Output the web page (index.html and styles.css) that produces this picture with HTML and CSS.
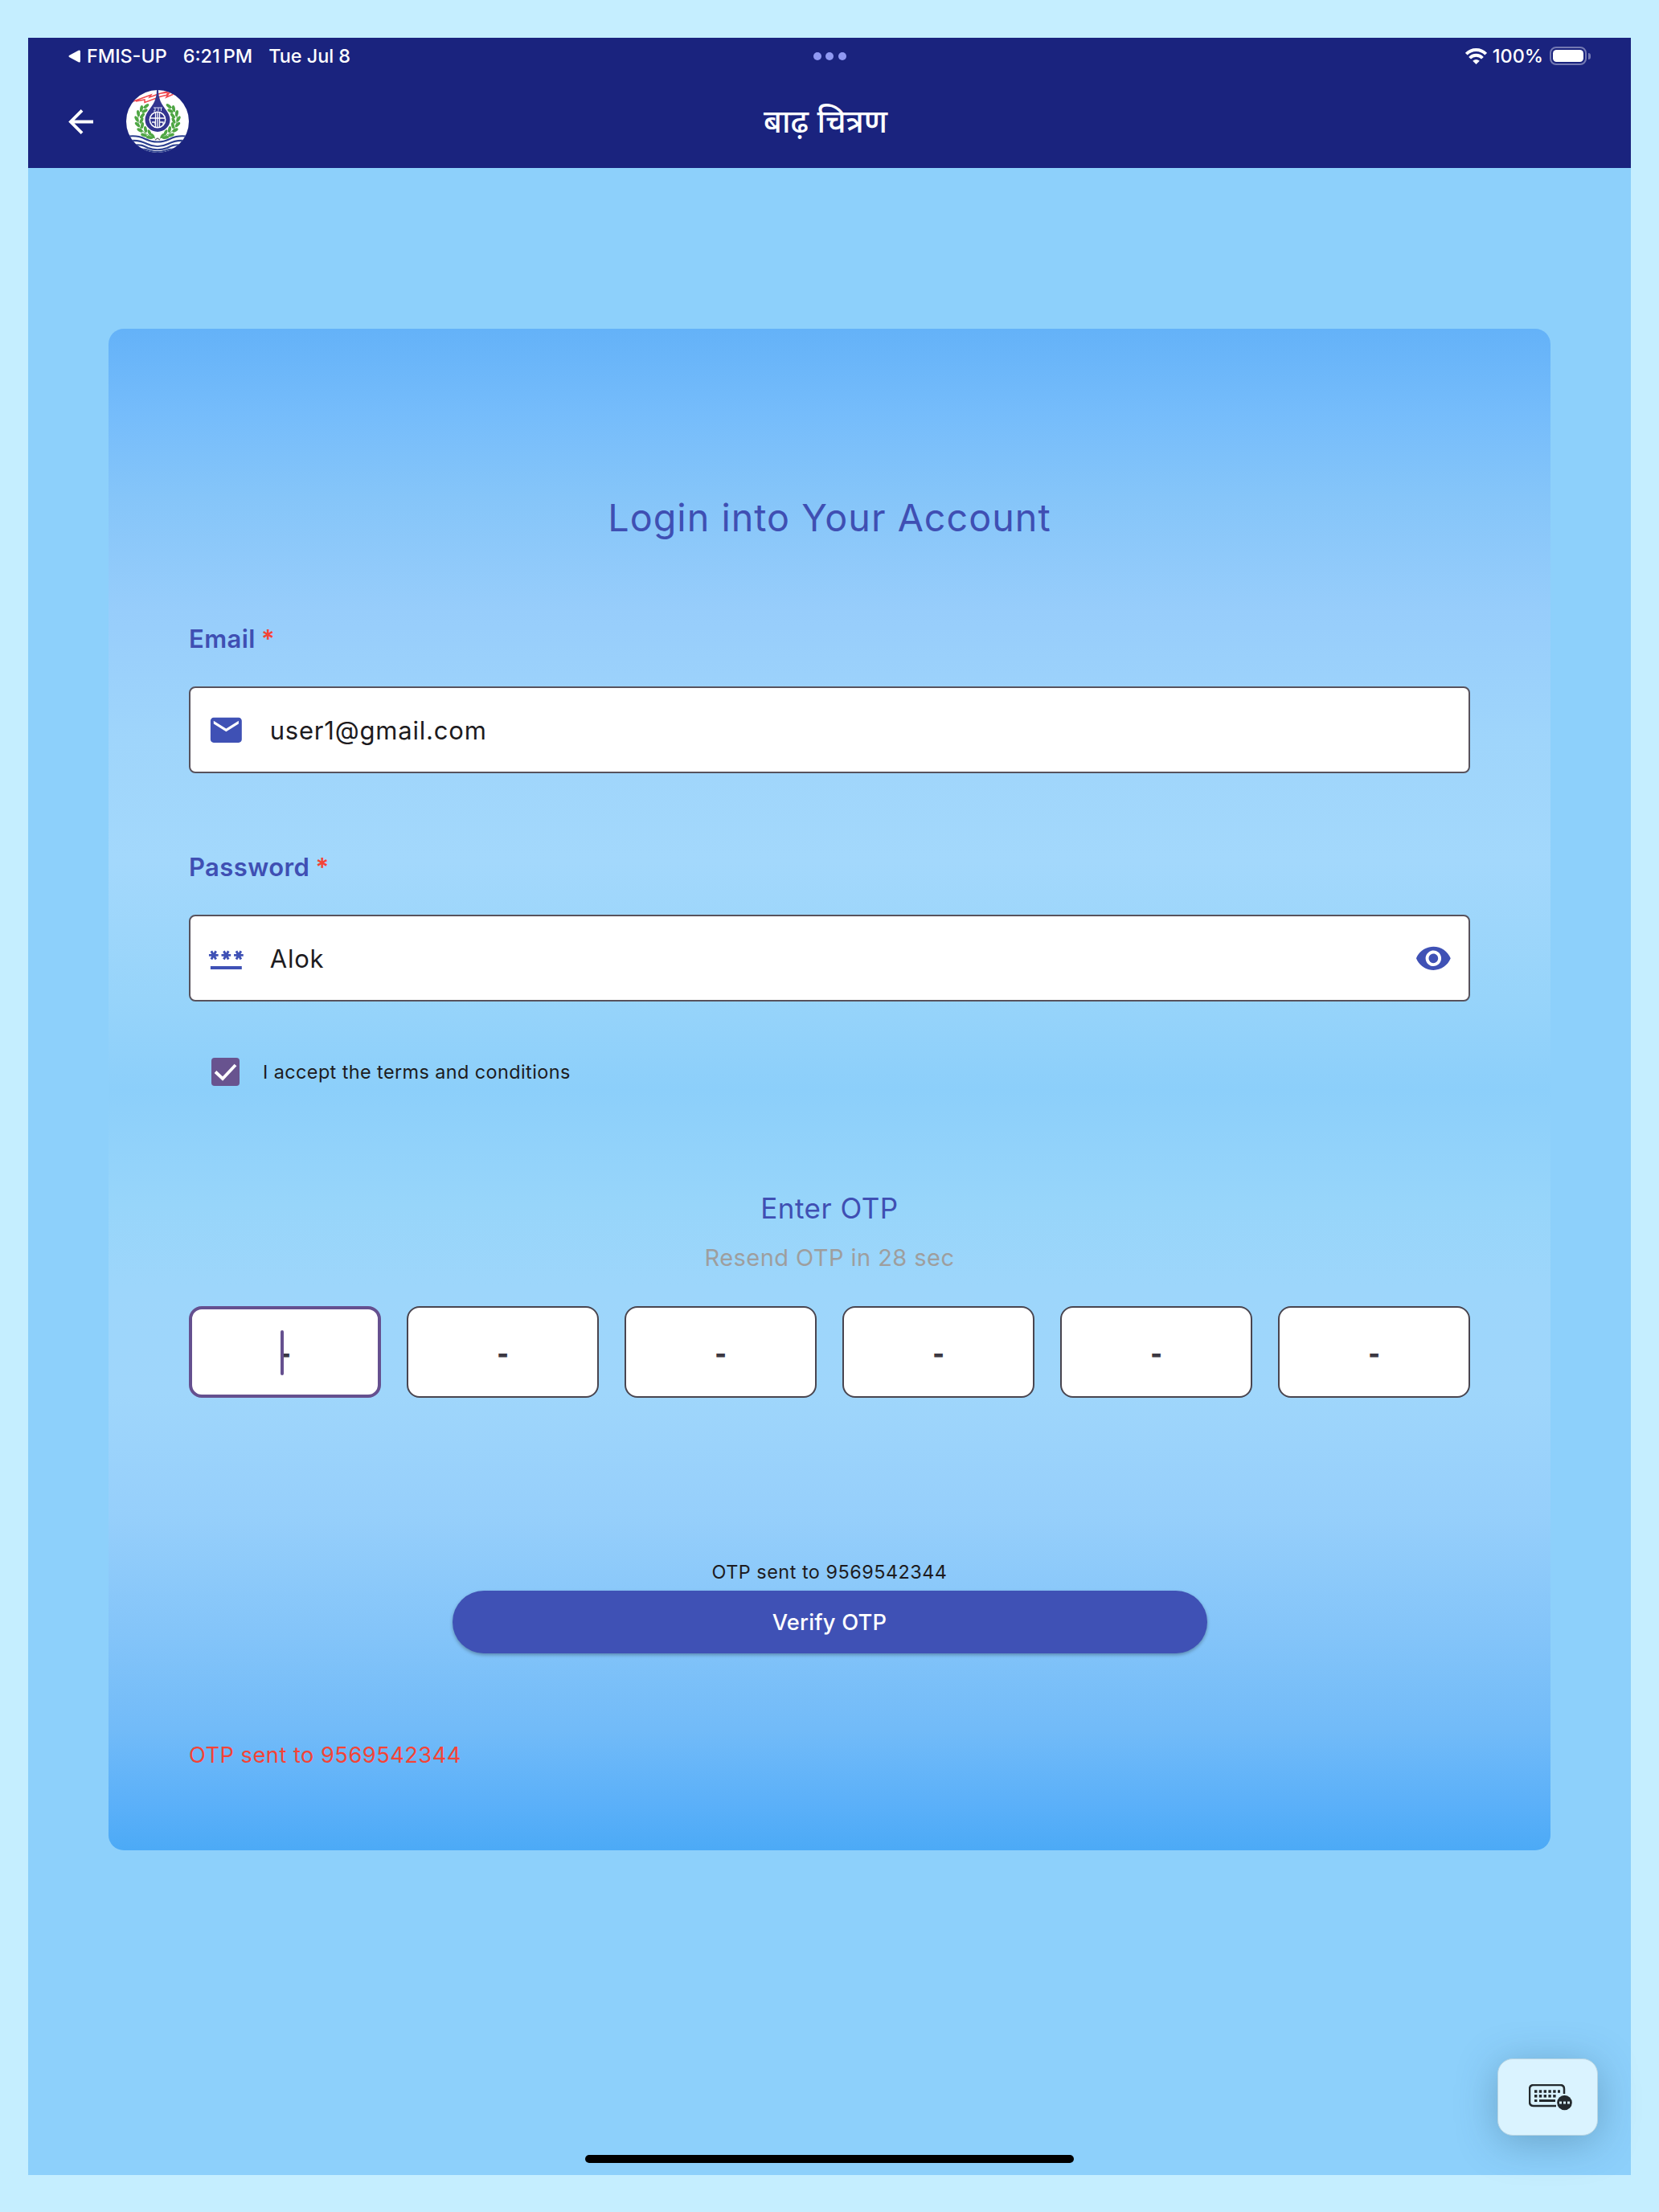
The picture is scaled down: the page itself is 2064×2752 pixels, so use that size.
FILE: index.html
```html
<!DOCTYPE html>
<html lang="hi">

<head>
    <meta charset="UTF-8">
    <meta name="viewport" content="width=device-width, initial-scale=1.0">
    <title>बाढ़ चित्रण</title>
    <link rel="stylesheet" href="styles.css">
</head>

<body>
    <div class="screen">
        <header class="header">
            <div class="status-bar">
                <div class="status-left">
                    <svg class="back-app" viewBox="0 0 15 16"><path d="M1 7 12.600.700Q15-.3 15 2v12q0 2.300-2.400 1.300L1 9Q0 8 1 7z" fill="#fff"/></svg>
                    <span class="status-app">FMIS-UP</span>
                    <span class="status-time">6:21&#8201;PM</span>
                    <span class="status-date">Tue Jul 8</span>
                </div>
                <div class="dots"><i></i><i></i><i></i></div>
                <div class="status-right">
                    <svg class="wifi" viewBox="0 0 27 20">
                        <path d="M1.300 7.200a17 17 0 0 1 24.400 0" fill="none" stroke="#fff" stroke-width="4"/>
                        <path d="M5.600 12.200a10.800 10.800 0 0 1 15.800 0" fill="none" stroke="#fff" stroke-width="3.800"/>
                        <path d="M13.500 20l-4.300-4.200q4.300-3.400 8.600 0z" fill="#fff"/>
                    </svg>
                    <span class="battery-text">100%</span>
                    <div class="battery"><div class="battery-fill"></div></div>
                    <div class="battery-tip"></div>
                </div>
            </div>
            <div class="app-bar">
                <div class="app-bar-left">
                    <svg class="back" viewBox="0 0 30 30"><path d="M30 15H3M16.500 1.300 2.800 15l13.700 13.700" fill="none" stroke="#fff" stroke-width="3.700"/></svg>
                    <svg class="logo" viewBox="0 0 78 78">
                        <defs>
                            <clipPath id="logo-clip"><circle cx="39" cy="39" r="39"/></clipPath>
                            <g id="branch" fill="#4fa644">
                                <path d="M36 60Q12 52 15 32 17 24 26 18" fill="none" stroke="#4fa644" stroke-width="1"/>
                                <ellipse cx="25" cy="20" rx="1.900" ry="4" transform="rotate(50 25 20)"/>
                                <ellipse cx="19" cy="23" rx="1.900" ry="4" transform="rotate(10 19 23)"/>
                                <ellipse cx="23" cy="26" rx="1.900" ry="4" transform="rotate(60 23 26)"/>
                                <ellipse cx="15" cy="29" rx="1.900" ry="4" transform="rotate(-10 15 29)"/>
                                <ellipse cx="20" cy="32" rx="1.900" ry="4" transform="rotate(40 20 32)"/>
                                <ellipse cx="13" cy="36" rx="1.900" ry="4" transform="rotate(-30 13 36)"/>
                                <ellipse cx="19" cy="38" rx="1.900" ry="4" transform="rotate(25 19 38)"/>
                                <ellipse cx="14" cy="43" rx="1.900" ry="4" transform="rotate(-45 14 43)"/>
                                <ellipse cx="20" cy="44" rx="1.900" ry="4" transform="rotate(10 20 44)"/>
                                <ellipse cx="17" cy="50" rx="1.900" ry="4" transform="rotate(-60 17 50)"/>
                                <ellipse cx="24" cy="49" rx="1.900" ry="4" transform="rotate(-10 24 49)"/>
                                <ellipse cx="22" cy="56" rx="1.900" ry="4" transform="rotate(-70 22 56)"/>
                                <ellipse cx="29" cy="53" rx="1.900" ry="4" transform="rotate(-25 29 53)"/>
                                <ellipse cx="29" cy="59" rx="1.900" ry="4.500" transform="rotate(-80 29 59)"/>
                                <ellipse cx="33" cy="57" rx="1.700" ry="3.500" transform="rotate(-35 33 57)"/>
                            </g>
                        </defs>
                        <g clip-path="url(#logo-clip)">
                            <rect width="78" height="78" fill="#fff"/>
                            <path d="M9 14 31 6l-2 3 11-4 14-4M12 14l11-2 0 3.500L43 8l9-2-2 3 9-4M44 4l8-1-1 2 9-4" fill="none" stroke="#ef4a50" stroke-width="1.500"/>
                            <use href="#branch"/>
                            <use href="#branch" transform="matrix(-1 0 0 1 78 0)"/>
                            <path d="M38 0h2q0 10 4.500 17.500C50 26 54.500 30 54.500 37a15.500 15 0 0 1-31 0c0-7 4.500-11 10-19.500Q38 10 38 0z" fill="#33358f"/>
                            <path d="M34 22h11M36 22v4h-2M40 22v4M43.500 22v4" fill="none" stroke="#dfe2f4" stroke-width="1"/>
                            <circle cx="39" cy="37" r="9.700" fill="none" stroke="#fff" stroke-width="1.500"/>
                            <path d="M39 27v20M29.500 35h19M36.500 28v18M41.500 28v18M32 40h4v3M42 40h4v3" fill="none" stroke="#fff" stroke-width="1.300"/>
                            <path d="M36 62l3-2 3 2" fill="none" stroke="#666" stroke-width="1.200"/>
                            <path d="M3 57.500c11-1 16 1 22 4 8 4 20 4 28 0 6-3 11-5 22-4M6 63c9-1 14 1 20 4 8 4 18 4 26 0 6-3 11-5 20-4M10 68.500c8-1 12 1 17 3.500 7 3 17 3 24 0 5-2.500 9-4.500 17-3.500M16 74c6-1 9 0 13 1.500 6 2 14 2 20 0 4-1.500 7-2.500 13-1.500" fill="none" stroke="#2b3f8f" stroke-width="2.200"/>
                        </g>
                    </svg>
                </div>
                <h1>बाढ़ चित्रण</h1>
            </div>
        </header>

        <form class="card" id="login-form">
            <h2>Login into Your Account</h2>

            <label class="label" for="email">Email <span class="star">*</span></label>
            <div class="field">
                <svg class="icon" viewBox="0 0 24 24"><path d="M20 4H4c-1.100 0-1.990.9-1.990 2L2 18c0 1.100.9 2 2 2h16c1.100 0 2-.9 2-2V6c0-1.100-.9-2-2-2zm0 4l-8 5-8-5V6l8 5 8-5v2z"/></svg>
                <input type="text" id="email" value="user1@gmail.com" spellcheck="false">
            </div>

            <label class="label" for="password">Password <span class="star">*</span></label>
            <div class="field">
                <svg class="icon" viewBox="0 0 24 24"><path d="M2 17h20v2H2v-2zm1.150-4.050L4 11.470l.85 1.480 1.300-.75-.85-1.480H7v-1.500H5.300l.85-1.470L4.850 7 4 8.470 3.150 7l-1.300.75.85 1.470H1v1.500h1.700l-.85 1.480 1.300.75zm6.700-.75l1.300.75.85-1.480.85 1.480 1.300-.75-.85-1.480H15v-1.500h-1.700l.85-1.470-1.300-.75L12 8.470 11.150 7l-1.300.75.85 1.470H9v1.500h1.700l-.85 1.480zM23 9.220h-1.700l.85-1.470-1.300-.75L20 8.470 19.150 7l-1.300.75.85 1.470H17v1.500h1.700l-.85 1.480 1.300.75.85-1.480.85 1.480 1.300-.75-.85-1.480H23v-1.500z"/></svg>
                <input type="text" id="password" value="Alok" spellcheck="false">
                <svg class="icon" viewBox="0 0 24 24"><path d="M12 4.500C7 4.500 2.730 7.610 1 12c1.730 4.390 6 7.500 11 7.500s9.270-3.110 11-7.500c-1.730-4.390-6-7.500-11-7.500zM12 17c-2.760 0-5-2.240-5-5s2.240-5 5-5 5 2.240 5 5-2.240 5-5 5zm0-8c-1.660 0-3 1.340-3 3s1.340 3 3 3 3-1.340 3-3-1.340-3-3-3z"/></svg>
            </div>

            <div class="terms">
                <svg class="checkbox" viewBox="0 0 35 35"><rect width="35" height="35" rx="4" fill="#68538f"/><path d="M5 17.500l9 8.500L30 9" fill="none" stroke="#fff" stroke-width="3.800"/></svg>
                <span>I accept the terms and conditions</span>
            </div>

            <h3>Enter OTP</h3>
            <p class="resend">Resend OTP in 28 sec</p>
            <div class="otp">
                <div class="otp-box active">-<span class="cursor"></span></div>
                <div class="otp-box">-</div>
                <div class="otp-box">-</div>
                <div class="otp-box">-</div>
                <div class="otp-box">-</div>
                <div class="otp-box">-</div>
            </div>

            <p class="sent">OTP sent to 9569542344</p>
            <button type="button" class="verify">Verify OTP</button>
            <p class="error">OTP sent to 9569542344</p>
        </form>

        <button type="button" class="keyboard">
            <svg viewBox="0 0 54 34">
                <path d="M44 12V6q0-5-5-5H6Q1 1 1 6v16q0 5 5 5h28" fill="none" stroke="#23292d" stroke-width="2.500"/>
                <path d="M7 9h32M7 14.800h27" fill="none" stroke="#23292d" stroke-width="3.400" stroke-dasharray="3.400 2.400"/>
                <path d="M7 20.500h3.400M13 20.500h20" fill="none" stroke="#23292d" stroke-width="3.200"/>
                <circle cx="44.500" cy="23" r="9.300" fill="#23292d"/>
                <path d="M38 23h3M43 23h3M48 23h3" stroke="#daf3ff" stroke-width="3"/>
            </svg>
        </button>
        <div class="home-bar"></div>
    </div>
</body>

</html>
```
FILE: styles.css
```css
* {
    box-sizing: border-box;
}

body {
    margin: 0;
    padding: 47px 35px 46px;
    background-color: #c5eeff;
    font-family: Inter, "Noto Sans", sans-serif;
}

h1, h2, h3, p {
    margin: 0;
}

.screen {
    position: relative;
    height: 2659px;
    background-color: #8dd0fb;
}

/* Header */
.header {
    height: 162px;
    background-color: #1a237e;
    color: white;
}

.status-bar {
    display: grid;
    grid-template-columns: 1fr auto 1fr;
    align-items: center;
    height: 45px;
    padding: 0 50px;
    font-size: 23.4px;
    font-weight: 500;
    line-height: 45px;
}

.status-left,
.status-right {
    display: flex;
    align-items: center;
}

.status-right {
    justify-content: flex-end;
}

.back-app {
    width: 15px;
    height: 16px;
    margin-right: 8px;
}

.status-time {
    margin: 0 20px;
}

.dots {
    display: flex;
    gap: 5.5px;
}

.dots i {
    width: 10px;
    height: 10px;
    border-radius: 50%;
    background-color: #9099f3;
}

.wifi {
    width: 27px;
    height: 20px;
    margin-right: 7px;
}

.battery {
    width: 46px;
    height: 23px;
    margin-left: 8px;
    padding: 2px;
    border: 2px solid #7479b3;
    border-radius: 8px;
}

.battery-fill {
    height: 100%;
    border-radius: 4.5px;
    background-color: white;
}

.battery-tip {
    width: 3px;
    height: 8px;
    margin-left: 2px;
    border-radius: 0 3px 3px 0;
    background-color: #7479b3;
}

.app-bar {
    display: grid;
    grid-template-columns: 1fr auto 1fr;
    align-items: center;
    height: 118px;
    padding: 0 60px 0 50px;
}

.app-bar-left {
    display: flex;
    align-items: center;
}

.back {
    width: 31px;
    height: 31px;
}

.logo {
    width: 78px;
    height: 78px;
    margin-left: 41px;
}

h1 {
    font-size: 39.2px;
    font-weight: 500;
    line-height: 60px;
}

/* Card */
.card {
    display: flex;
    flex-direction: column;
    height: 1893px;
    margin: 200px 100px 0;
    padding: 205px 100px 0;
    border-radius: 19px;
    background: linear-gradient(#64b2f8 0%, #75bcfb 5.500%, #85c5f9 11%, #97cdfb 18.500%, #9fd5fb 27%, #a3d8fc 35%, #97d4fa 44%, #8ccffa 50%, #97d5fa 57.500%, #9dd6fb 63%, #9fd6fb 70%, #96cffb 78%, #83c4f9 86%, #72bbf8 92%, #5bb0f9 97%, #4caaf6 100%);
}

h2 {
    color: #3f4fb3;
    font-size: 46.7px;
    font-weight: 400;
    line-height: 60px;
    letter-spacing: 1px;
    text-align: center;
}

.label {
    margin-top: 97px;
    color: #3f4fb3;
    font-size: 31px;
    font-weight: 600;
    line-height: 40px;
    letter-spacing: 0.4px;
}

h2 + .label {
    margin-top: 101px;
}

.star {
    margin-left: -1px;
    color: #f44336;
}

.field {
    display: flex;
    align-items: center;
    height: 108px;
    margin-top: 39px;
    padding: 0 20px 0 21px;
    border: 2px solid #58525c;
    border-radius: 8px;
    background-color: white;
}

.icon {
    width: 46.7px;
    height: 46.7px;
    fill: #3f51b5;
}

.field input {
    flex: 1;
    margin-left: 31px;
    padding: 0;
    border: none;
    outline: none;
    background: none;
    color: #1d1b20;
    font-family: inherit;
    font-size: 31px;
    letter-spacing: 0.8px;
}

.terms {
    display: flex;
    align-items: center;
    height: 36px;
    margin-top: 69px;
    padding-left: 28px;
    color: #1d1b20;
    font-size: 23.4px;
    letter-spacing: 0.42px;
}

.checkbox {
    width: 35px;
    height: 35px;
    margin-right: 29px;
}

h3 {
    margin-top: 130px;
    color: #3f4fb3;
    font-size: 35px;
    font-weight: 400;
    line-height: 44px;
    letter-spacing: 0.5px;
    text-align: center;
}

.resend {
    margin-top: 22px;
    color: #9e9e9e;
    font-size: 29px;
    line-height: 36px;
    letter-spacing: 0.45px;
    text-align: center;
}

.otp {
    display: grid;
    grid-template-columns: repeat(6, 1fr);
    gap: 32px;
    margin-top: 42px;
}

.otp-box {
    position: relative;
    display: flex;
    align-items: center;
    justify-content: center;
    height: 114px;
    padding-top: 2px;
    border: 2px solid #49454f;
    border-radius: 16px;
    background-color: white;
    color: #3c3842;
    font-size: 31px;
    font-weight: 900;
}

.otp-box.active {
    border: 4px solid #65508f;
}

.cursor {
    position: absolute;
    top: 26px;
    left: 110px;
    width: 4px;
    height: 56px;
    border-radius: 2px;
    background-color: #65508f;
}

.sent {
    margin-top: 201px;
    color: #1d1b20;
    font-size: 23.4px;
    line-height: 32px;
    letter-spacing: 0.5px;
    text-align: center;
}

.verify {
    align-self: center;
    width: 939px;
    height: 78px;
    margin-top: 7px;
    border: none;
    border-radius: 39px;
    background-color: #3f51b5;
    box-shadow: 0 2px 4px rgba(0, 0, 0, 0.3);
    color: white;
    font-family: inherit;
    font-size: 27.3px;
    font-weight: 450;
    letter-spacing: 0.2px;
}

.error {
    margin-top: 109px;
    color: #f44336;
    font-size: 27.3px;
    line-height: 36px;
    letter-spacing: 0.45px;
}

/* Floating keyboard button */
.keyboard {
    position: absolute;
    right: 41px;
    bottom: 49px;
    display: flex;
    align-items: center;
    justify-content: center;
    width: 125px;
    height: 96px;
    padding: 1px 0 0 6px;
    border: 1px solid #b9d5e2;
    border-radius: 19px;
    background-color: #daf3ff;
    box-shadow: 0 8px 50px rgba(40, 80, 110, 0.35);
}

.keyboard svg {
    width: 54px;
    height: 34px;
}

.home-bar {
    position: absolute;
    bottom: 15px;
    left: 693px;
    width: 608px;
    height: 10px;
    border-radius: 5px;
    background-color: black;
}
```
